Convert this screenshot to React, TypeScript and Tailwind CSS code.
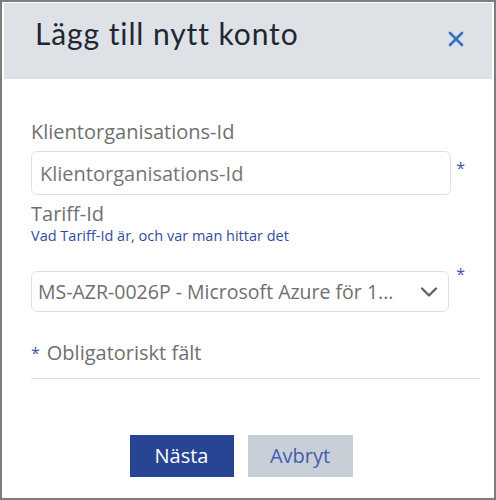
import { X, ChevronDown } from "lucide-react";

const labelClass = "text-[20px] leading-[24px] text-[#6f6f6f]";

export default function App() {
  return (
    <div className="h-[500px] w-[496px] overflow-hidden bg-white font-['Open_Sans',sans-serif]">
      <div className="flex h-[500px] w-[496px] flex-col border-2 border-[#7d7d7d] bg-white">
        <div className="mx-[2px] mt-[1px] flex h-[76px] items-start justify-between bg-[#dee2e6] pl-[31px] pr-[24px] pt-[12px]">
          <h1 className="font-['Lato',sans-serif] text-[30px] font-normal leading-[36px] tracking-[0.9px] text-[#1e2732]">
            Lägg till nytt konto
          </h1>
          <X className="mt-[12px] h-[24px] w-[24px] text-[#3a6fc4]" strokeWidth={2.7} />
        </div>

        <div className="flex flex-col px-[29px] pt-[41px]">
          <label className={labelClass}>Klientorganisations-Id</label>
          <div className="mt-[7px] flex items-start gap-[5px]">
            <input
              className="h-[44px] w-[421px] rounded-[6px] border border-[#dde1e6] px-[8px] text-[20px] text-[#6f6f6f] placeholder:text-[#757575] focus:outline-none"
              placeholder="Klientorganisations-Id"
            />
            <span className="mt-[5px] text-[16px] text-[#3b55a8]">*</span>
          </div>

          <label className={`${labelClass} mt-[7px]`}>Tariff-Id</label>
          <a className="text-[14.5px] leading-[19px] text-[#2f4da0]" href="#">
            Vad Tariff-Id är, och var man hittar det
          </a>

          <div className="mt-[26px] flex items-start gap-[5px]">
            <div className="flex h-[41px] w-[421px] items-center justify-between rounded-[6px] border border-[#dde1e6] pl-[6px] pr-[5px]">
              <span className="text-[19.5px] text-[#6f6f6f]">MS-AZR-0026P - Microsoft Azure för 1...</span>
              <ChevronDown className="h-[28px] w-[28px] text-[#606060]" strokeWidth={2} />
            </div>
            <span className="-mt-[9px] ml-[2px] text-[16px] text-[#3b55a8]">*</span>
          </div>

          <div className="mt-[29px] flex items-center gap-[7px] text-[20px] leading-[24px] text-[#6f6f6f]">
            <span className="text-[16px] text-[#3b55a8]">*</span>
            <span>Obligatoriskt fält</span>
          </div>
          <div className="mt-[13px] h-px w-[449px] bg-[#dde1e6]" />

          <div className="mt-[56px] flex justify-center gap-[14px] pr-[14px]">
            <button className="h-[42px] w-[104px] bg-[#274592] text-[20px] text-white">Nästa</button>
            <button className="h-[42px] w-[105px] bg-[#c9cfd6] text-[20px] text-[#3f5cb3]">Avbryt</button>
          </div>
        </div>
      </div>
    </div>
  );
}
